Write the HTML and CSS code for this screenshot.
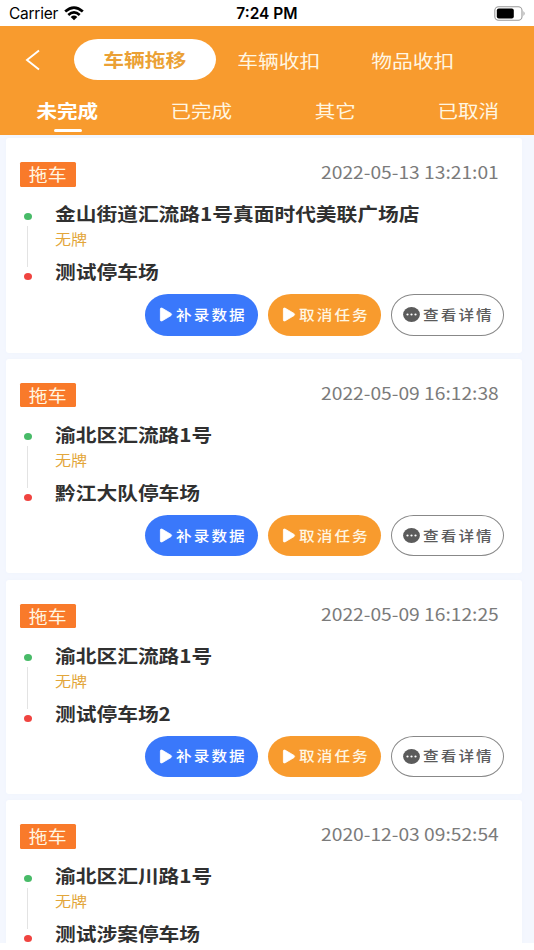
FILE: index.html
```
<!DOCTYPE html>
<html lang="zh-CN">
<head>
<meta charset="utf-8">
<title>车辆拖移</title>
<link rel="stylesheet" href="styles.css">
</head>
<body>
<svg class="defs" width="0" height="0">
  <symbol id="play" viewBox="0 0 13 15"><path d="M.9 2 Q.9 .6 2.5 1.1 L11.5 6.4 Q12.8 7.5 11.5 8.6 L2.5 13.9 Q.9 14.4 .9 13Z" fill="#fff" stroke="#fff" stroke-width=".8"/></symbol>
  <symbol id="more" viewBox="0 0 17 15"><ellipse cx="8.5" cy="7.5" rx="8.4" ry="7.4" fill="#5b5b5b"/><g fill="#fff"><circle cx="4.5" cy="7.5" r="1.1"/><circle cx="8.5" cy="7.5" r="1.1"/><circle cx="12.5" cy="7.5" r="1.1"/></g></symbol>
</svg>
<div class="status">
  <div class="carrier"><span>Carrier</span>
    <svg width="20" height="15" viewBox="0 0 20 15"><g fill="none" stroke="#000" stroke-width="2.7"><path d="M1.2 5.6 Q10 -2.4 18.8 5.6"/><path d="M4.3 9 Q10 3.9 15.7 9"/></g><path d="M6.7 11 Q10 8.2 13.3 11 L10 14.3Z"/></svg>
  </div>
  <div class="time">7:24 PM</div>
  <svg class="battery" width="33" height="15" viewBox="0 0 33 15"><rect x=".8" y=".8" width="27.2" height="13.4" rx="3.8" fill="none" stroke="#999" stroke-width="1.1"/><rect x="2.8" y="2.6" width="17" height="9.8" rx="2"/><path d="M29.5 5 Q31.7 7.5 29.5 10Z" fill="#999"/></svg>
</div>
<header class="header">
  <div class="tabs">
    <svg class="back" width="16" height="22" viewBox="0 0 16 22"><path d="M14 1.5 L2 11 L14 20.5" fill="none" stroke="#fff" stroke-width="1.9"/></svg>
    <div class="tab active"><span class="wide">车辆拖移</span></div>
    <div class="tab"><span class="wide">车辆收扣</span></div>
    <div class="tab"><span class="wide">物品收扣</span></div>
  </div>
  <div class="filters">
    <div class="filter active"><span class="wide">未完成</span></div>
    <div class="filter"><span class="wide">已完成</span></div>
    <div class="filter"><span class="wide">其它</span></div>
    <div class="filter"><span class="wide">已取消</span></div>
  </div>
</header>
<main class="list">
  <article class="card">
    <div class="top"><div class="badge"><span class="wide">拖车</span></div><time><span>2022-05-13 13:21:01</span></time></div>
    <div class="route"><div class="rail"><i class="dot"></i><i class="line"></i><i class="dot end"></i></div>
      <div class="places"><h2><span>金山街道汇流路1号真面时代美联广场店</span></h2><p><span>无牌</span></p><h2><span>测试停车场</span></h2></div></div>
    <div class="actions"><div class="btn blue"><svg class="play"><use href="#play"/></svg><span>补录数据</span></div><div class="btn orange"><svg class="play"><use href="#play"/></svg><span>取消任务</span></div><div class="btn outline"><svg class="more"><use href="#more"/></svg><span>查看详情</span></div></div>
  </article>
  <article class="card">
    <div class="top"><div class="badge"><span class="wide">拖车</span></div><time><span>2022-05-09 16:12:38</span></time></div>
    <div class="route"><div class="rail"><i class="dot"></i><i class="line"></i><i class="dot end"></i></div>
      <div class="places"><h2><span>渝北区汇流路1号</span></h2><p><span>无牌</span></p><h2><span>黔江大队停车场</span></h2></div></div>
    <div class="actions"><div class="btn blue"><svg class="play"><use href="#play"/></svg><span>补录数据</span></div><div class="btn orange"><svg class="play"><use href="#play"/></svg><span>取消任务</span></div><div class="btn outline"><svg class="more"><use href="#more"/></svg><span>查看详情</span></div></div>
  </article>
  <article class="card">
    <div class="top"><div class="badge"><span class="wide">拖车</span></div><time><span>2022-05-09 16:12:25</span></time></div>
    <div class="route"><div class="rail"><i class="dot"></i><i class="line"></i><i class="dot end"></i></div>
      <div class="places"><h2><span>渝北区汇流路1号</span></h2><p><span>无牌</span></p><h2><span>测试停车场2</span></h2></div></div>
    <div class="actions"><div class="btn blue"><svg class="play"><use href="#play"/></svg><span>补录数据</span></div><div class="btn orange"><svg class="play"><use href="#play"/></svg><span>取消任务</span></div><div class="btn outline"><svg class="more"><use href="#more"/></svg><span>查看详情</span></div></div>
  </article>
  <article class="card">
    <div class="top"><div class="badge"><span class="wide">拖车</span></div><time><span>2020-12-03 09:52:54</span></time></div>
    <div class="route"><div class="rail"><i class="dot"></i><i class="line"></i><i class="dot end"></i></div>
      <div class="places"><h2><span>渝北区汇川路1号</span></h2><p><span>无牌</span></p><h2><span>测试涉案停车场</span></h2></div></div>
  </article>
</main>
</body>
</html>
```
FILE: styles.css
```
* { box-sizing: border-box; }
body {
  margin: 0;
  width: 534px;
  height: 950px;
  overflow: hidden;
  background: #fff;
  font-family: "Noto Sans CJK SC", sans-serif;
}
.defs { display: block; }
svg { flex: none; }
.status {
  height: 26px;
  padding: 1px 7px 0 9px;
  display: grid;
  grid-template-columns: 1fr auto 1fr;
  align-items: center;
  font: 15.5px/24px Inter, sans-serif;
  color: #000;
}
.carrier { display: flex; align-items: center; gap: 6px; }
.carrier span { letter-spacing: -.25px; }
.carrier svg { margin-top: -1px; }
.time { font-weight: 600; font-size: 15.5px; margin-left: -2px; }
.battery { justify-self: end; }
.header { height: 108.5px; background: #f89b2e; color: #fff6e2; }
.wide { display: inline-block; transform: scaleX(1.13); white-space: nowrap; }
.tabs { display: flex; align-items: center; height: 67px; padding-left: 25px; }
.back { margin-right: 37px; }
.tab { width: 134px; text-align: center; font-size: 18.4px; line-height: 40px; }
.tab.active {
  width: 142px;
  height: 41px;
  margin: 0 -4px;
  border-radius: 24px / 20.5px;
  background: #fff;
  color: #eba135;
  font-weight: 700;
}
.tab:nth-child(2) { margin-left: -4px; }
.filters { display: grid; grid-template-columns: repeat(4, 1fr); padding-left: 1px; margin-right: -1px; }
.filter { height: 41px; text-align: center; font-size: 18.2px; line-height: 35px; }
.filter.active { color: #fff; font-weight: 700; }
.filter.active::after {
  content: "";
  display: block;
  width: 28px;
  height: 2.5px;
  margin: 1px auto 0;
  border-radius: 2px;
  background: #fff;
}
.list {
  height: 808.5px;
  overflow: hidden;
  padding: 3.5px 12px 0 6px;
  background: #f4f7fe;
  display: flex;
  flex-direction: column;
  gap: 6.3px;
}
.card { flex: none; height: 214.5px; padding: 22px 18px 0 13.5px; background: #fff; border-radius: 3px; box-shadow: 0 0 4px #f0f4fd; }
.top { display: flex; justify-content: space-between; height: 26px; }
.badge {
  width: 56.5px;
  height: 24.5px;
  margin-top: 2px;
  border-radius: 1.5px;
  background: #f97a2a;
  color: #fff6e2;
  font-size: 16.7px;
  line-height: 24.5px;
  text-align: center;
}
time { margin-right: 5px; font-size: 17.4px; line-height: 24px; color: #7b7b7b; }
time span { display: inline-block; transform: scaleX(1.105); transform-origin: right; }
.route { display: flex; height: 108px; padding-top: 13px; }
.rail { width: 16px; padding-top: 13.5px; display: flex; flex-direction: column; align-items: center; }
.dot { width: 8px; height: 7px; border-radius: 50%; background: #48bb68; }
.dot.end { background: #f04440; }
.line { width: 1.5px; height: 41.5px; margin: 6px 0; background: #e3e3e3; }
.places { margin-left: 19px; }
.places span { display: inline-block; white-space: nowrap; transform: scaleX(1.12); transform-origin: left; }
h2 { margin: 0; font-size: 18.5px; line-height: 28px; font-weight: 700; color: #303030; }
p { margin: 0; padding-bottom: 6px; font-size: 14.3px; line-height: 24px; color: #e3a63a; }
.actions { display: flex; justify-content: flex-end; gap: 10px; }
.btn {
  width: 113px;
  height: 41.5px;
  display: flex;
  align-items: center;
  padding-left: 14px;
  border-radius: 23px / 20.75px;
  color: #fff6e2;
  font-size: 14.2px;
  font-weight: 500;
}
.btn span { margin-top: -2px; letter-spacing: 1.9px; white-space: nowrap; transform: scaleX(1.1); transform-origin: left; }
.play { width: 14px; height: 15px; margin-right: 3px; }
.blue { background: #3a78fb; color: #fff; }
.orange { background: #f89b2e; }
.outline { border: 1px solid #888; padding-left: 11px; color: #5b5b5b; }
.more { width: 17px; height: 15px; margin-right: 3px; }
```
